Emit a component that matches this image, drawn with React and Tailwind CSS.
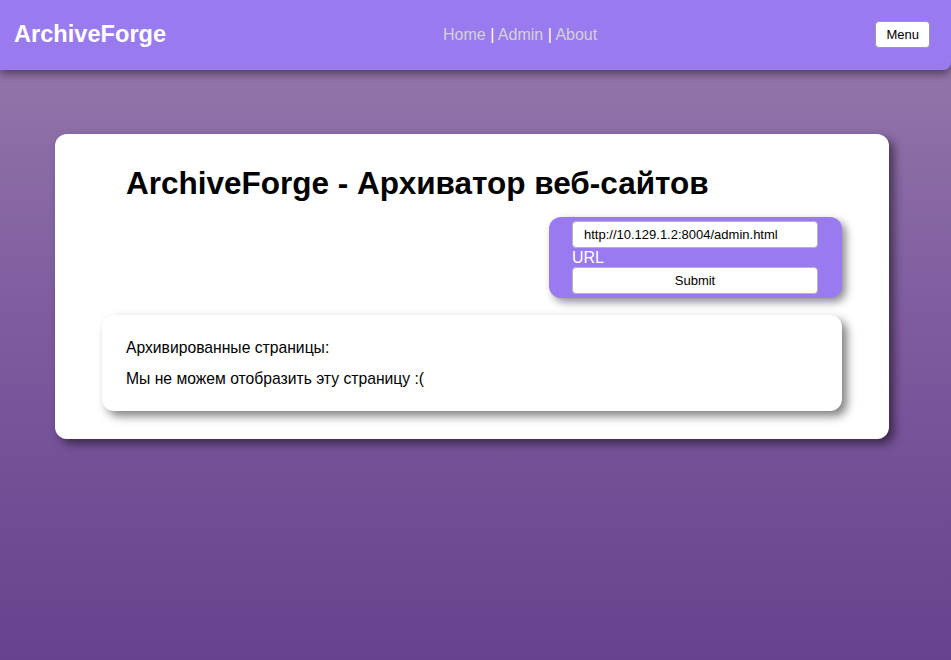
export default function App() {
  return (
    <div className="min-h-screen w-full bg-gradient-to-b from-[#987bac] via-[#7e5a9e] to-[#68428d] font-['Liberation_Sans',Arial,sans-serif]">
      <header className="relative z-10 flex h-[70px] items-center rounded-br-lg bg-[#9a7bef] pb-[1px] pl-[14px] pr-[21px] shadow-[0_4px_8px_rgba(0,0,0,0.45)]">
        <h1 className="w-[429px] text-[23.6px] font-bold leading-none text-white">ArchiveForge</h1>
        <nav className="text-[16px] text-white">
          <a className="text-[#d3d3d3]">Home</a> | <a className="text-[#d3d3d3]">Admin</a> |{' '}
          <a className="text-[#d3d3d3]">About</a>
        </nav>
        <button className="ml-auto h-[27px] rounded-[4px] border border-[#9a9a9a] bg-white px-[10px] text-[13px] text-black">
          Menu
        </button>
      </header>

      <main className="pl-[55px] pr-[62px] pt-[64px]">
        <section className="rounded-xl bg-white px-[47px] pb-[28px] pt-[31px] shadow-[5px_5px_10px_rgba(0,0,0,0.5)]">
          <h2 className="pl-6 text-[31.5px] font-bold leading-[37px] text-black">
            ArchiveForge - Архиватор веб-сайтов
          </h2>

          <div className="mt-[15px] flex justify-end">
            <form className="flex w-[293px] flex-col rounded-xl bg-[#9a7bef] pb-[4px] pl-[23px] pr-[24px] pt-[4px] shadow-[4px_4px_8px_rgba(0,0,0,0.45)]">
              <input
                readOnly
                value="http://10.129.1.2:8004/admin.html"
                className="h-[27px] w-full rounded-[4px] border border-[#b5b5b5] bg-white px-[11px] text-[13px] text-black outline-none"
              />
              <label className="text-[16px] leading-[19px] text-white">URL</label>
              <button
                type="button"
                className="h-[27px] w-full rounded-[4px] border border-[#b5b5b5] bg-white text-[13px] text-black"
              >
                Submit
              </button>
            </form>
          </div>

          <div className="mt-[17px] flex flex-col gap-3 rounded-xl bg-white px-6 pb-[23px] pt-[23px] text-[15.7px] leading-[19px] text-black shadow-[5px_5px_10px_rgba(0,0,0,0.5)]">
            <p>Архивированные страницы:</p>
            <p>Мы не можем отобразить эту страницу :(</p>
          </div>
        </section>
      </main>
    </div>
  )
}
